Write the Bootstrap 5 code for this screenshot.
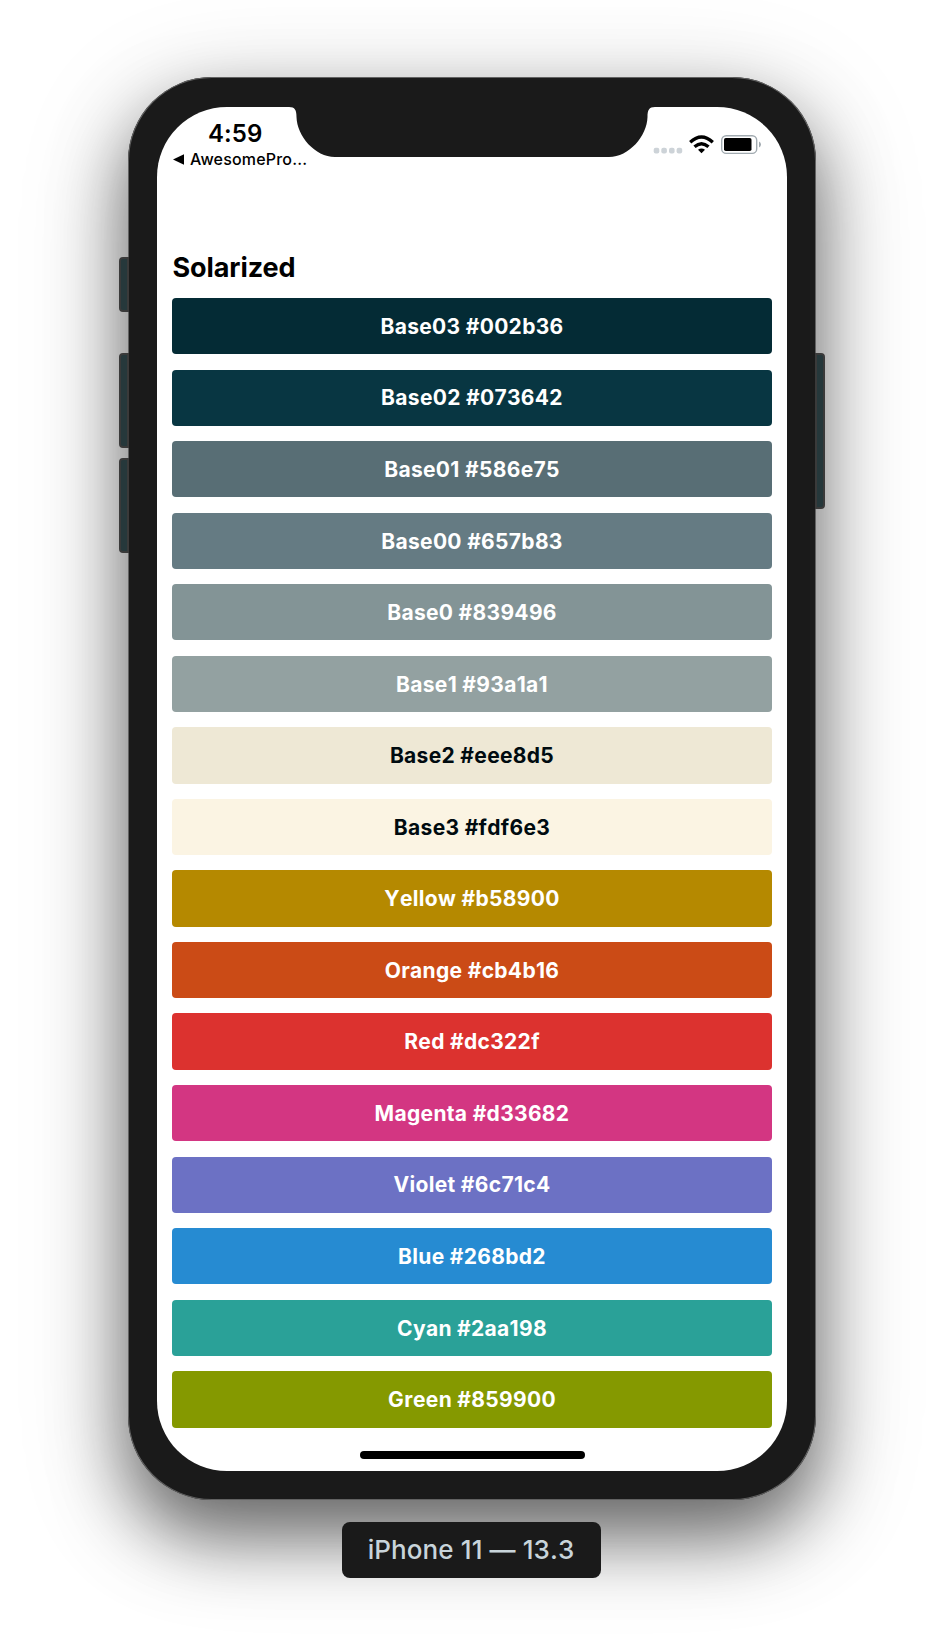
<!DOCTYPE html>
<html lang="en">
<head>
<meta charset="utf-8">
<meta name="viewport" content="width=device-width, initial-scale=1">
<title>Solarized</title>
<link href="https://cdn.jsdelivr.net/npm/bootstrap@5.3.0/dist/css/bootstrap.min.css" rel="stylesheet">
<style>
  body { font-family: Inter, "Liberation Sans", sans-serif; background: #fff; color: #000; height: 1650px; overflow: hidden; padding-top: 77px; }
  .phone { width: 688px; height: 1423px; padding: 30px 29px 29px; background: #1a1a1a; border-radius: 84px; z-index: 0;
    box-shadow: inset 0 0 0 1px #626262, 0 36px 70px rgba(0,0,0,.51), 0 24px 110px rgba(0,0,0,.22); }
  .side-key { position: absolute; width: 10px; background: #26383b; border: 2px solid #3a3a3a; border-radius: 4px 0 0 4px; z-index: -1; left: -9px; }
  .key-mute { top: 180px; height: 55px; }
  .key-up { top: 276px; height: 95px; }
  .key-down { top: 381px; height: 95px; }
  .key-power { top: 276px; height: 156px; left: auto; right: -9px; border-radius: 0 4px 4px 0; }
  .screen { width: 630px; height: 1364px; border-radius: 70px; padding: 0 15px; }
  .notch { left: 132px; top: -1px; }
  .status-bar { height: 144px; }
  .clock { font-size: 24px; font-weight: 600; line-height: 24px; padding: 15px 0 0 36px; letter-spacing: .1px; }
  .back-link { font-size: 16px; font-weight: 500; line-height: 20px; margin-top: 3px; padding-left: 1px; gap: 6px; letter-spacing: .18px; }
  .indicators { width: 110px; height: 60px; margin-right: 10px; }
  .title { font-size: 27px; font-weight: 700; line-height: 34px; height: 47px; letter-spacing: -.1px; padding-left: .5px; }
  .swatches { gap: 15.25px; }
  .swatch { height: 56.3px; padding-top: 1px; border-radius: 4px; font-size: 21px; font-weight: 650; font-kerning: none; color: #fff; letter-spacing: .32px; }
  .swatch.on-light { color: #000b10; }
  .home-bar { width: 225px; height: 8px; border-radius: 4px; margin-top: 23px; }
  .device-label { width: 259px; height: 56px; margin-top: 22px; border-radius: 8px; background: #1a1a1a; color: #c8d4da; font-size: 26px; font-weight: 500; font-kerning: none; letter-spacing: .1px; left: -1px; padding-bottom: 1px; }
</style>
</head>
<body>
<div class="phone position-relative mx-auto">
  <span class="side-key key-mute"></span>
  <span class="side-key key-up"></span>
  <span class="side-key key-down"></span>
  <span class="side-key key-power"></span>
  <main class="screen bg-white position-relative d-flex flex-column">
    <svg class="notch position-absolute" width="366" height="51" viewBox="0 0 366 51" aria-hidden="true">
      <path d="M0 0V1C6 1 7.500 4 7.500 11C8 30 26 51 46 51H320C340 51 358 30 358.500 11C358.500 4 360 1 366 1V0Z" fill="#1a1a1a"/>
    </svg>
    <header class="status-bar d-flex justify-content-between">
      <div>
        <div class="clock">4:59</div>
        <div class="back-link d-flex align-items-center">
          <svg width="11" height="11" viewBox="0 0 11 11"><path d="M0 5.500L11 .3V10.700Z"/></svg><span>AwesomePro...</span>
        </div>
      </div>
      <svg class="indicators" viewBox="652 107 110 60" aria-hidden="true">
        <g fill="#cdd3d8"><rect x="653.700" y="147.800" width="5.600" height="5.600" rx="2"/><rect x="661.300" y="147.800" width="5.600" height="5.600" rx="2"/><rect x="669" y="147.800" width="5.600" height="5.600" rx="2"/><rect x="676.600" y="147.800" width="5.600" height="5.600" rx="2"/></g>
        <g fill="none" stroke="#000" stroke-width="3.300"><path d="M690.200 142.300Q701.500 131.700 712.800 142.300"/><path d="M694.500 146.800Q701.500 140.600 708.500 146.800"/></g>
        <path d="M701.500 153.300L698 149.800Q701.500 147 705 149.800Z"/>
        <rect x="721.700" y="135.700" width="35" height="17.700" rx="4.500" fill="none" stroke="#a1aab0" stroke-width="1.400"/>
        <rect x="724" y="138" width="27.500" height="13" rx="1.800"/>
        <path d="M759 141.500Q761 142.300 761 144.500T759 147.500Z" fill="#a1aab0"/>
      </svg>
    </header>
    <h1 class="title m-0">Solarized</h1>
    <div class="swatches d-flex flex-column">
      <div class="swatch d-flex align-items-center justify-content-center" style="background:#042b35">Base03 #002b36</div>
      <div class="swatch d-flex align-items-center justify-content-center" style="background:#083642">Base02 #073642</div>
      <div class="swatch d-flex align-items-center justify-content-center" style="background:#586e75">Base01 #586e75</div>
      <div class="swatch d-flex align-items-center justify-content-center" style="background:#657b83">Base00 #657b83</div>
      <div class="swatch d-flex align-items-center justify-content-center" style="background:#839496">Base0 #839496</div>
      <div class="swatch d-flex align-items-center justify-content-center" style="background:#93a1a1">Base1 #93a1a1</div>
      <div class="swatch on-light d-flex align-items-center justify-content-center" style="background:#eee8d5">Base2 #eee8d5</div>
      <div class="swatch on-light d-flex align-items-center justify-content-center" style="background:#fbf4e3">Base3 #fdf6e3</div>
      <div class="swatch d-flex align-items-center justify-content-center" style="background:#b58900">Yellow #b58900</div>
      <div class="swatch d-flex align-items-center justify-content-center" style="background:#cb4b16">Orange #cb4b16</div>
      <div class="swatch d-flex align-items-center justify-content-center" style="background:#dc322f">Red #dc322f</div>
      <div class="swatch d-flex align-items-center justify-content-center" style="background:#d33682">Magenta #d33682</div>
      <div class="swatch d-flex align-items-center justify-content-center" style="background:#6c71c4">Violet #6c71c4</div>
      <div class="swatch d-flex align-items-center justify-content-center" style="background:#268bd2">Blue #268bd2</div>
      <div class="swatch d-flex align-items-center justify-content-center" style="background:#2aa198">Cyan #2aa198</div>
      <div class="swatch d-flex align-items-center justify-content-center" style="background:#859900">Green #859900</div>
    </div>
    <div class="home-bar bg-black mx-auto"></div>
  </main>
</div>
<footer class="device-label position-relative mx-auto d-flex align-items-center justify-content-center">iPhone 11 — 13.3</footer>
<script src="https://cdn.jsdelivr.net/npm/bootstrap@5.3.0/dist/js/bootstrap.bundle.min.js"></script>
</body>
</html>
